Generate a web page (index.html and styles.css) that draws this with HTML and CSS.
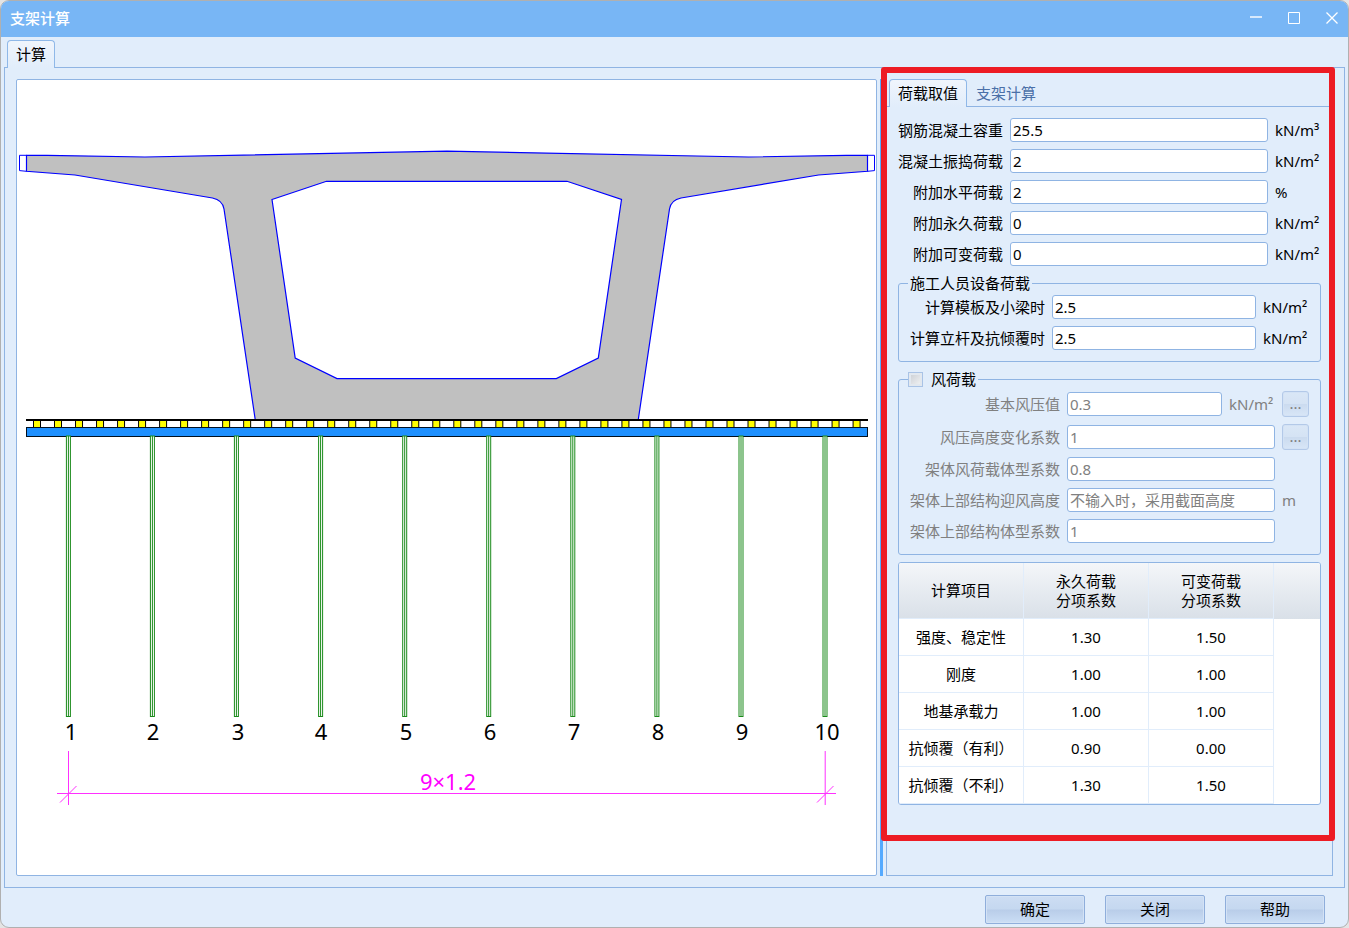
FILE: index.html
```html
<!DOCTYPE html>
<html lang="zh-CN">
<head>
<meta charset="utf-8">
<title>支架计算</title>
<link rel="stylesheet" href="styles.css">
</head>
<body>
<div class="window">
  <header class="titlebar">
    <h1 class="title">支架计算</h1>
    <div class="window-controls">
      <button type="button" class="window-button" aria-label="最小化"><svg width="12" height="12" viewBox="0 0 12 12"><path d="M0 5H12" stroke-width="2" opacity=".7"/></svg></button>
      <button type="button" class="window-button" aria-label="最大化"><svg width="12" height="12" viewBox="0 0 12 12"><path d="M.5 .5H11.5V11.5H.5Z"/></svg></button>
      <button type="button" class="window-button" aria-label="关闭窗口"><svg width="12" height="12" viewBox="0 0 12 12"><path d="M.5 .5L11.5 11.5M11.5 .5L.5 11.5" stroke-width="1.3"/></svg></button>
    </div>
  </header>

  <div class="tabs" role="tablist">
    <button type="button" class="tab active" role="tab" aria-selected="true">计算</button>
  </div>

  <main class="pane workspace">
    <section class="canvas" aria-label="支架横断面图">
      <svg class="drawing" viewBox="17 80 859 795">
        <defs>
          <g id="post"><rect x="-2" y="436" width="4" height="280.5" fill="#fff"/><path d="M0 436V716"/></g>
        </defs>
        <path class="section" fill-rule="evenodd" d="M26.5 155.3H47L145 157L447 151.2L748.5 157L846.5 155.3H867.5V171.3L818.5 175L681 198Q671 200 669.5 209L638.3 419.5H255.2L224 209Q222.5 200 212.5 198L75 175L26.5 171.3Z M272 199.5L326.5 181.3H567L621.5 199.5L598.3 358L556.3 378.6H337L295.2 358Z"/>
        <path class="edge" d="M26.5 155.3H19.5V170.6L26.5 171.3M867.5 155.3H874.5V170.6L867.5 171.3M26.5 155V171M867.5 155V171"/>
        <path class="batten-edge" d="M33 424.5H861"/>
        <path class="batten" d="M34 424.5H861"/>
        <rect x="26.5" y="427.5" width="841" height="9" fill="#1e90ff" stroke="#001020"/>
        <path d="M26 420H868" stroke="#000" stroke-width="2"/>
        <g class="posts">
          <use href="#post" x="68.4"/><use href="#post" x="152.4"/><use href="#post" x="236.4"/><use href="#post" x="320.6"/><use href="#post" x="404.7"/>
          <use href="#post" x="488.7"/><use href="#post" x="572.8"/><use href="#post" x="656.9"/><use href="#post" x="741"/><use href="#post" x="825"/>
        </g>
        <g class="post-number">
          <text x="71" y="740">1</text><text x="153" y="740">2</text><text x="238" y="740">3</text><text x="321" y="740">4</text><text x="406" y="740">5</text>
          <text x="490" y="740">6</text><text x="574" y="740">7</text><text x="658" y="740">8</text><text x="742" y="740">9</text><text x="827" y="740">10</text>
        </g>
        <path class="dimension" d="M57 793.5H836M68.5 751V805M825.2 751V805"/>
        <path class="dimension tick" d="M60 802.5L76.5 786M817 802.5L833.5 786"/>
        <text class="dimension-text" x="448" y="790">9×1.2</text>
      </svg>
    </section>

    <div class="splitter"></div>

    <section class="side">
      <div class="tabs" role="tablist">
        <button type="button" class="tab active" role="tab" aria-selected="true">荷载取值</button>
        <button type="button" class="tab" role="tab" aria-selected="false">支架计算</button>
      </div>
      <form class="pane loads">
        <div class="fields">
          <label for="density">钢筋混凝土容重</label><input id="density" type="text" value="25.5"><span>kN/m³</span>
          <label for="vibration">混凝土振捣荷载</label><input id="vibration" type="text" value="2"><span>kN/m²</span>
          <label for="horizontal">附加水平荷载</label><input id="horizontal" type="text" value="2"><span>%</span>
          <label for="permanent">附加永久荷载</label><input id="permanent" type="text" value="0"><span>kN/m²</span>
          <label for="variable">附加可变荷载</label><input id="variable" type="text" value="0"><span>kN/m²</span>
        </div>

        <fieldset class="group">
          <legend>施工人员设备荷载</legend>
          <div class="fields">
            <label for="formwork">计算模板及小梁时</label><input id="formwork" type="text" value="2.5"><span>kN/m²</span>
            <label for="upright">计算立杆及抗倾覆时</label><input id="upright" type="text" value="2.5"><span>kN/m²</span>
          </div>
        </fieldset>

        <fieldset class="group" disabled>
          <legend class="check-legend"><label class="check"><input type="checkbox">风荷载</label></legend>
          <div class="fields wind">
            <label for="pressure">基本风压值</label>
            <div class="with-unit"><input id="pressure" type="text" value="0.3"><span>kN/m²</span></div>
            <button type="button" class="button" aria-label="选择基本风压值">...</button>
            <label for="height-factor">风压高度变化系数</label><input id="height-factor" type="text" value="1">
            <button type="button" class="button" aria-label="选择风压高度变化系数">...</button>
            <label for="frame-shape">架体风荷载体型系数</label><input id="frame-shape" type="text" value="0.8"><span></span>
            <label for="wind-height">架体上部结构迎风高度</label><input id="wind-height" type="text" placeholder="不输入时，采用截面高度"><span>m</span>
            <label for="upper-shape">架体上部结构体型系数</label><input id="upper-shape" type="text" value="1"><span></span>
          </div>
        </fieldset>

        <div class="table-frame">
          <table class="factors">
            <colgroup><col class="data-col"><col class="data-col"><col class="data-col"><col></colgroup>
            <thead>
              <tr><th scope="col">计算项目</th><th scope="col">永久荷载<br>分项系数</th><th scope="col">可变荷载<br>分项系数</th><td></td></tr>
            </thead>
            <tbody>
              <tr><td>强度、稳定性</td><td>1.30</td><td>1.50</td><td></td></tr>
              <tr><td>刚度</td><td>1.00</td><td>1.00</td><td></td></tr>
              <tr><td>地基承载力</td><td>1.00</td><td>1.00</td><td></td></tr>
              <tr><td>抗倾覆（有利）</td><td>0.90</td><td>0.00</td><td></td></tr>
              <tr><td>抗倾覆（不利）</td><td>1.30</td><td>1.50</td><td></td></tr>
            </tbody>
          </table>
        </div>
      </form>
      <div class="highlight"></div>
    </section>
  </main>

  <footer class="actions">
    <button type="button" class="button">确定</button>
    <button type="button" class="button">关闭</button>
    <button type="button" class="button">帮助</button>
  </footer>
</div>
</body>
</html>
```
FILE: styles.css
```css
*, *::before, *::after { box-sizing: border-box; }

body {
  margin: 0;
  background: #e4e4e4;
  color: #000;
  font: 15px/20px "Noto Sans", "Noto Sans CJK SC", sans-serif;
}

button, input { font: inherit; color: inherit; }

.window {
  display: flex;
  flex-direction: column;
  min-height: 100vh;
  border: 1px solid #b0b0b0;
  border-radius: 9px;
  background: #e1edfb;
  overflow: hidden;
}

.titlebar {
  display: flex;
  align-items: center;
  justify-content: space-between;
  height: 36px;
  padding: 0 10px 2px 9px;
  background: #78b6f5;
  color: #fff;
}

.title { margin: 0; font-size: 15px; font-weight: 500; }

.window-controls { display: flex; gap: 26px; }

.window-button {
  display: flex;
  padding: 0;
  border: 0;
  background: none;
}

.window-button svg { fill: none; stroke: #fff; }

.tabs {
  display: flex;
  position: relative;
  z-index: 1;
  height: 28px;
  margin-bottom: -1px;
  padding-left: 3px;
}

.window > .tabs { margin: 3px 3px -1px; }

.tab {
  padding: 0 8px 2px;
  border: 1px solid transparent;
  border-bottom: 0;
  background: none;
  color: #4a70a8;
}

.tab.active {
  border-color: #8fb8e8;
  border-radius: 4px 4px 0 0;
  background: linear-gradient(#f0f5fc, #e1edfb);
  color: #000;
}

.pane { border: 1px solid #8fb4e3; }

.workspace {
  flex: 1;
  display: grid;
  grid-template-columns: minmax(0, 861fr) 3px minmax(400px, 447fr);
  gap: 3px;
  margin: 0 3px;
  padding: 11px;
}

.canvas {
  display: flex;
  border: 1px solid #8fb4e3;
  border-radius: 2px;
  background: #fff;
}

.drawing { flex: 1; min-width: 0; width: 100%; }
.drawing path { fill: none; }
.drawing .section { fill: #c0c0c0; stroke: #00f; stroke-width: 1.2; }
.edge { stroke: #00f; }
.batten-edge { stroke: #000; stroke-width: 7; stroke-dasharray: 8 13.015; }
.batten { stroke: #ff0; stroke-width: 7; stroke-dasharray: 6 15.015; }
.posts { stroke: #1a8a1a; stroke-width: 1; }
.dimension { stroke: #ff30ff; }
.tick { stroke: #ff30ff; }
.post-number, .dimension-text { font-size: 22px; text-anchor: middle; }
.dimension-text { fill: #f0f; }

.splitter { background: #55aaff; }

.side {
  position: relative;
  display: flex;
  flex-direction: column;
}

.loads {
  flex: 1;
  display: flex;
  flex-direction: column;
  gap: 7px;
  padding: 11px;
}

.fields {
  display: grid;
  grid-template-columns: auto minmax(0, 1fr) 46px;
  gap: 7px;
  align-items: center;
  white-space: nowrap;
}

.fields.wind { grid-template-columns: auto minmax(0, 1fr) 27px; }
.fields > label { text-align: right; }

.fields input {
  width: 100%;
  min-width: 0;
  height: 24px;
  padding: 0 2px;
  border: 1px solid #8fb4e3;
  border-radius: 3px;
  background: #fff;
}

.fields input::placeholder { color: #808080; }

.with-unit { display: flex; align-items: center; gap: 7px; }
.with-unit span { flex: 0 0 46px; }

.group {
  min-width: 0;
  margin: 0;
  padding: 2px 11px 11px;
  border: 1px solid #8fb4e3;
  border-radius: 3px;
}

.group legend { margin-left: -2px; padding: 0 2px; }
.group .check-legend { padding-left: 0; }
.group:disabled .fields { color: #808080; }

.check { display: flex; align-items: center; gap: 8px; }

.check input {
  appearance: none;
  width: 15px;
  height: 15px;
  margin: 0;
  border: 1px solid #a9c3e6;
  background: linear-gradient(135deg, #c8ccd2, #f4f5f6);
  box-shadow: inset 0 0 0 2px #e2e8ef;
}

.button {
  padding: 0 0 2px;
  border: 1px solid #8faedb;
  border-radius: 2px;
  background: linear-gradient(#cdddf3, #c5d8f0 48%, #b9cde9 52%, #cbdef5);
  box-shadow: inset 0 0 0 1px #d3e2f5;
}

.wind .button {
  height: 26px;
  border-color: #b3c9e8;
  border-radius: 3px;
  background: linear-gradient(#dae7f6, #d5e3f4 48%, #cbdbef 52%, #d8e6f7);
}

.table-frame {
  border: 1px solid #8fb4e3;
  border-radius: 3px;
  background: #fff;
  overflow: hidden;
}

.factors {
  width: 100%;
  table-layout: fixed;
  border-spacing: 0;
  text-align: center;
  white-space: nowrap;
}

.data-col { width: 125px; }
.factors thead { background: linear-gradient(#f4f6f9, #d9e0e8); }
.factors th { height: 56px; font-weight: 400; line-height: 19px; }
.factors tbody td { height: 37px; }

.factors th, .factors td {
  padding: 0;
  border: solid #e1edfb;
  border-width: 0 1px 1px 0;
}

.factors td:last-child { border: 0; }

/* Frame that calls out the load settings */
.highlight {
  position: absolute;
  inset: -12px -2px 35px -5px;
  border: 6px solid #ed1c24;
  border-radius: 3px;
  pointer-events: none;
  z-index: 2;
}

.actions {
  display: flex;
  justify-content: flex-end;
  gap: 20px;
  padding: 7px 23px 3px;
}

.actions .button { width: 100px; height: 29px; }
```
